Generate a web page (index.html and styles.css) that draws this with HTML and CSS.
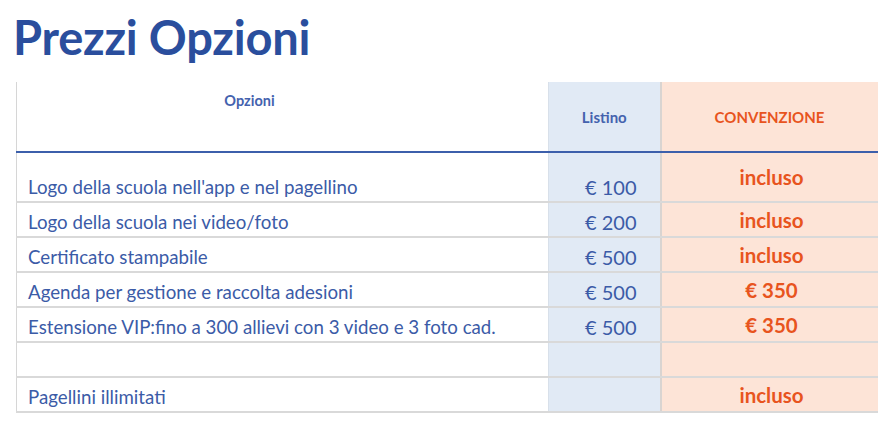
FILE: index.html
```html
<!DOCTYPE html>
<html lang="it">
<head>
<meta charset="utf-8">
<title>Prezzi Opzioni</title>
<link rel="stylesheet" href="styles.css">
</head>
<body>
<h1 class="title">Prezzi Opzioni</h1>
<table class="prices">
  <colgroup>
    <col class="col-opt">
    <col class="col-list">
    <col class="col-conv">
  </colgroup>
  <thead>
    <tr class="head-row">
      <th class="h-opt">Opzioni</th>
      <th class="h-list">Listino</th>
      <th class="h-conv">CONVENZIONE</th>
    </tr>
  </thead>
  <tbody>
    <tr class="row row-first">
      <td class="opt">Logo della scuola nell'app e nel pagellino</td>
      <td class="list">€ 100</td>
      <td class="conv">incluso</td>
    </tr>
    <tr class="row">
      <td class="opt">Logo della scuola nei video/foto</td>
      <td class="list">€ 200</td>
      <td class="conv">incluso</td>
    </tr>
    <tr class="row">
      <td class="opt">Certificato stampabile</td>
      <td class="list">€ 500</td>
      <td class="conv">incluso</td>
    </tr>
    <tr class="row">
      <td class="opt">Agenda per gestione e raccolta adesioni</td>
      <td class="list">€ 500</td>
      <td class="conv">€ 350</td>
    </tr>
    <tr class="row">
      <td class="opt">Estensione VIP:fino a 300 allievi con 3 video e 3 foto cad.</td>
      <td class="list">€ 500</td>
      <td class="conv">€ 350</td>
    </tr>
    <tr class="row">
      <td class="opt"></td>
      <td class="list"></td>
      <td class="conv"></td>
    </tr>
    <tr class="row">
      <td class="opt">Pagellini illimitati</td>
      <td class="list"></td>
      <td class="conv">incluso</td>
    </tr>
  </tbody>
</table>
</body>
</html>
```

FILE: styles.css
```css
html, body {
  margin: 0;
  padding: 0;
  background: #ffffff;
}

body {
  font-family: Lato, "Liberation Sans", sans-serif;
  color: #3b5ba7;
}

.title {
  margin: 0;
  padding: 9px 0 0 13px;
  height: 73px;
  box-sizing: border-box;
  font-size: 47px;
  line-height: 56px;
  font-weight: 700;
  color: #2a4e9d;
  letter-spacing: -0.2px;
}

.prices {
  margin-left: 16px;
  border-collapse: collapse;
  table-layout: fixed;
  width: 861px;
  margin-top: 9px;
}

.col-opt { width: 532px; }
.col-list { width: 112px; }
.col-conv { width: 217px; }

.head-row th {
  height: 69px;
  padding: 0;
  border-bottom: 2px solid #3c5fab;
  font-weight: 700;
  line-height: 18px;
}

.head-row .h-opt {
  height: 59px;
  padding: 10px 66px 0 0;
  border-left: 1px solid #d6d6d6;
  vertical-align: top;
  text-align: center;
  font-size: 14.5px;
  color: #4462ae;
}

.h-list {
  background: #e1eaf5;
  border-left: 1px solid #d8e0ea;
  font-size: 15px;
  color: #4462ae;
  vertical-align: middle;
}

.h-conv {
  background: #fde4d7;
  border-left: 2px solid #d9d4d1;
  font-size: 15px;
  color: #e8541e;
  vertical-align: middle;
}

.row td {
  height: 33px;
  padding: 0;
  border-bottom: 2px solid #d9d9d9;
  line-height: 22px;
}

.row .opt,
.row .list {
  height: 30px;
  padding-bottom: 3px;
  vertical-align: bottom;
}

.row-first td {
  height: 48px;
}

.row-first .opt,
.row-first .list {
  height: 45px;
}

.row .opt {
  border-left: 1px solid #d6d6d6;
  padding-left: 11px;
  font-size: 18.7px;
  white-space: nowrap;
}

.row .list {
  background: #e1eaf5;
  border-left: 1px solid #d8e0ea;
  text-align: right;
  padding-right: 23px;
  font-size: 20px;
}

.row .conv {
  background: #fde4d7;
  border-left: 2px solid #d9d4d1;
  text-align: center;
  vertical-align: middle;
  font-size: 20.5px;
  font-weight: 700;
  color: #e8541e;
  padding-left: 4px;
}
```
